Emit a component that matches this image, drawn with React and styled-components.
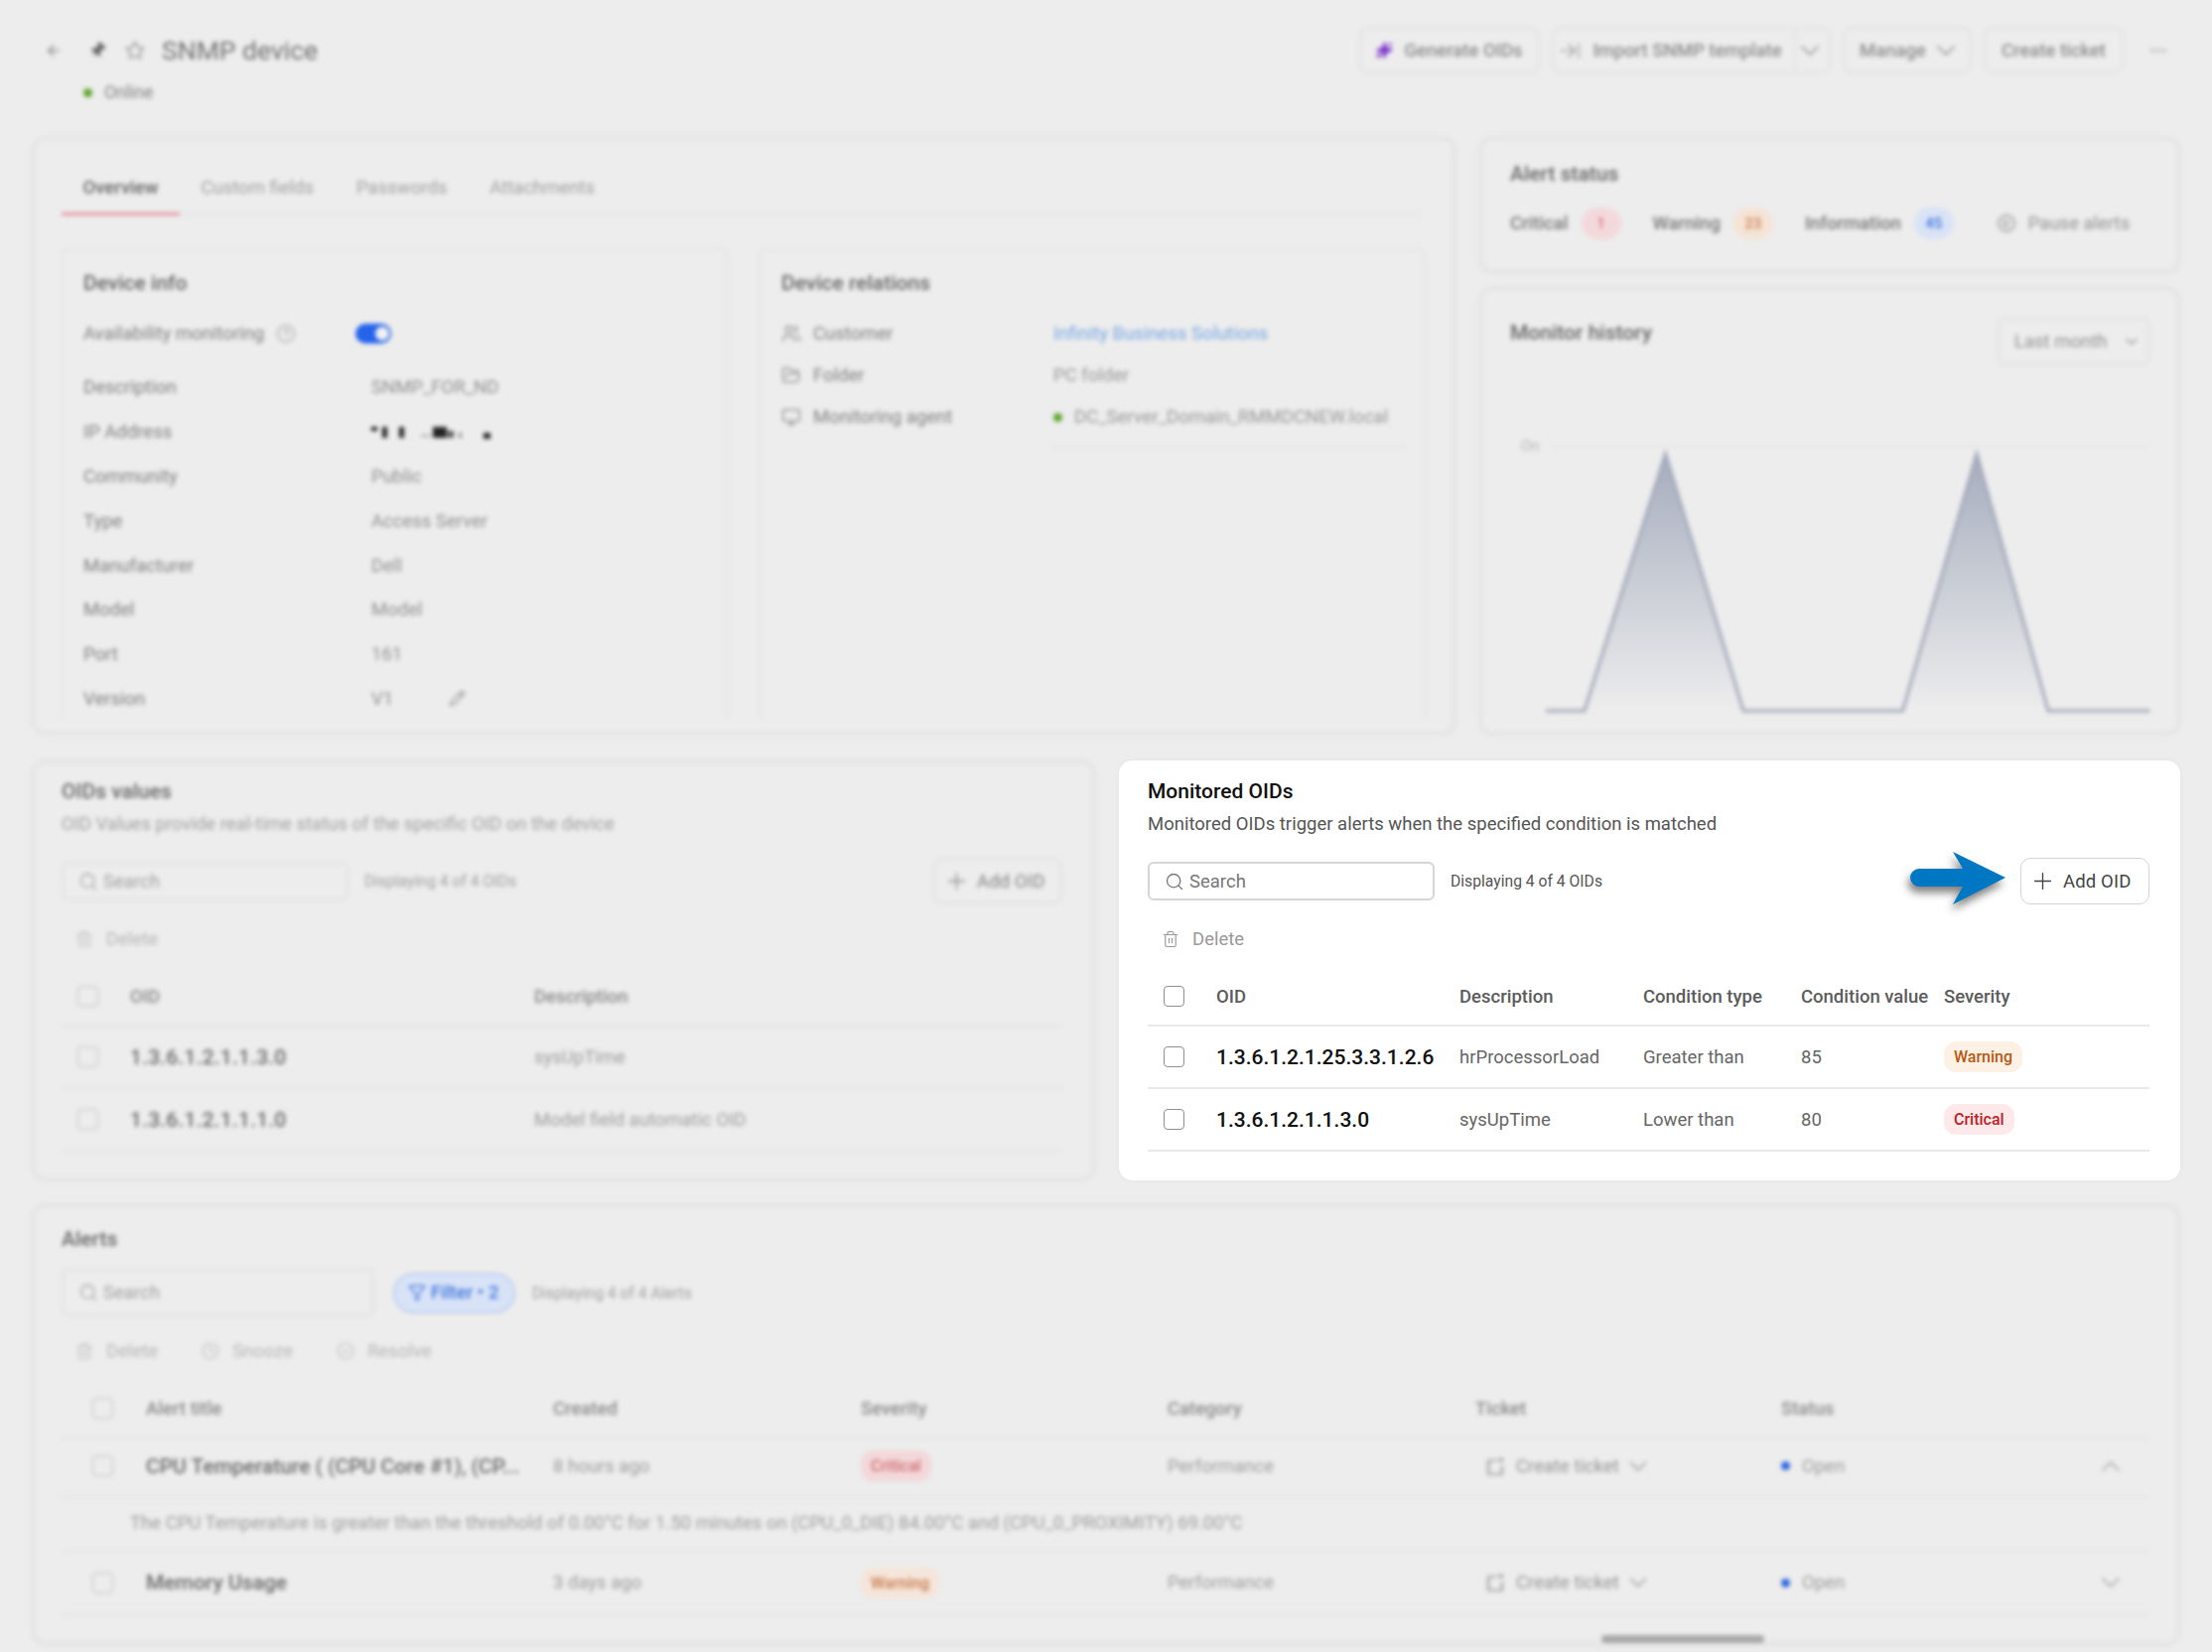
import React from "react";
import styled, { createGlobalStyle, css } from "styled-components";
import {
	ArrowLeft,
	ArrowRightToLine,
	ChevronDown,
	ChevronUp,
	CircleCheck,
	CircleHelp,
	Clock,
	Ellipsis,
	FolderOpen,
	Monitor,
	Pause,
	Pencil,
	Pin,
	Plus,
	Search,
	Sparkles,
	Star,
	Trash2,
	Users,
	Filter,
} from "lucide-react";

const GlobalStyle = createGlobalStyle`
	html, body {
		margin: 0;
		padding: 0;
		background: #ededed;
	}
	* {
		box-sizing: border-box;
	}
`;

const blurred = css`
	filter: blur(2.2px);
`;

const Page = styled.div`
	width: 2228px;
	height: 1664px;
	padding: 27px 32px 0;
	overflow: hidden;
	background: #ededed;
	font-family: Roboto, "Liberation Sans", sans-serif;
	font-size: 18.5px;
	color: #8a8a8a;
`;

const Header = styled.header`
	height: 79px;
	margin-bottom: 32px;
	${blurred}
`;
const HeaderTop = styled.div`
	display: flex;
	align-items: center;
	height: 47px;
	padding-left: 13px;
	color: #888;
`;
const HeaderIcons = styled.div`
	display: flex;
	align-items: center;
	gap: 19px;
	margin-right: 17px;
	& > svg:first-child {
		margin-right: 8px;
	}
`;
const TiltedPin = styled(Pin)`
	transform: rotate(40deg);
`;
const PageTitle = styled.h1`
	margin: 0;
	font-size: 26.5px;
	font-weight: 400;
	color: #707070;
`;
const HeaderActions = styled.div`
	display: flex;
	align-items: center;
	gap: 12px;
	margin-left: auto;
`;
const HeaderButton = styled.div`
	display: flex;
	align-items: center;
	justify-content: center;
	gap: 11px;
	height: 47px;
	width: ${(p) => p.$width}px;
	border: 2px solid #e2e2e2;
	border-radius: 9px;
	font-weight: 500;
	color: #8c8c8c;
`;
const Caret = styled(ChevronDown)`
	flex: none;
	margin: 0 -7px;
`;
const SplitCaret = styled.span`
	display: flex;
	align-items: center;
	align-self: stretch;
	padding: 0 6px 0 5px;
	border-left: 2px solid #e2e2e2;
	margin-left: 1px;
`;
const MoreButton = styled.div`
	display: flex;
	margin: 0 12px 0 13px;
	color: #aaa;
`;
const StatusLine = styled.div`
	display: flex;
	align-items: center;
	gap: 12px;
	height: 26px;
	margin: 6px 0 0 52px;
	font-size: 17.5px;
	color: #808080;
`;
const Dot = styled.span`
	width: ${(p) => p.$size || 9}px;
	height: ${(p) => p.$size || 9}px;
	border-radius: 50%;
	background: ${(p) => p.$color};
	flex: none;
`;

const TopGrid = styled.div`
	display: grid;
	grid-template-columns: 1434px 706px;
	grid-template-rows: 602px;
	gap: 24px;
`;
const MiddleGrid = styled.div`
	display: grid;
	grid-template-columns: 1071px 1069px;
	grid-template-rows: 423px;
	gap: 24px;
	margin: 26px 0 24px;
`;
const RightColumn = styled.div`
	display: flex;
	flex-direction: column;
	gap: 14px;
`;

const Panel = styled.section`
	position: relative;
	border-radius: 14px;
	border: 3px solid #e4e4e4;
	${(p) => p.$pad && `padding: ${p.$pad};`}
	${(p) => p.$fill && "flex: 1;"}
	${(p) => p.$height && `height: ${p.$height}px;`}
	${(p) =>
		p.$focus
			? "background: #fff; border: none; box-shadow: 0 0 6px rgba(0,0,0,.04);"
			: css`
					box-shadow: 0 0 0 1.5px #e6e6e6;
					${blurred}
				`}
`;

const Tabs = styled.div`
	display: flex;
	height: 49px;
	margin-right: 2px;
	border-bottom: 2px solid #e4e4e4;
`;
const Tab = styled.div`
	display: flex;
	align-items: flex-start;
	padding: 10px 21.5px 0;
	height: 49px;
	color: ${(p) => (p.$active ? "#666" : "#a0a0a0")};
	font-weight: ${(p) => (p.$active ? 500 : 400)};
	${(p) => p.$active && "border-bottom: 3px solid #e8919f;"}
`;

const CardGrid = styled.div`
	display: grid;
	grid-template-columns: 671px 671px;
	gap: 32px;
	margin-top: 33px;
`;
const Card = styled.div`
	height: 474px;
	padding: 20px 20px 0;
	border: 2px solid #e4e4e4;
	border-bottom: none;
	border-radius: 6px 6px 0 0;
`;
const CardTitle = styled.h3`
	margin: 0;
	height: 26px;
	line-height: 26px;
	font-size: 21px;
	font-weight: 500;
	color: #666;
`;
const InfoRow = styled.div`
	display: grid;
	grid-template-columns: 290px 1fr;
	align-items: center;
	height: 44.8px;
	color: #7f7f7f;
`;
const AvailabilityRow = styled(InfoRow)`
	height: 44px;
	margin: 16px 0 10px;
`;
const LabelGroup = styled.div`
	display: flex;
	align-items: center;
	gap: 12px;
`;
const Toggle = styled.div`
	display: flex;
	justify-content: flex-end;
	align-items: center;
	width: 36px;
	height: 20px;
	padding: 2px;
	margin-left: -16px;
	border-radius: 10px;
	background: #2563eb;
	&::after {
		content: "";
		width: 14px;
		height: 14px;
		border-radius: 50%;
		background: #f2f2f2;
	}
`;
const ValueGroup = styled.div`
	display: flex;
	align-items: center;
	gap: 56px;
	color: #8f8f8f;
`;
const RelationRow = styled.div`
	display: grid;
	grid-template-columns: 274px 356px;
	align-items: center;
	height: 42px;
	color: #7f7f7f;
	${(p) => p.$first && "margin-top: 17px;"}
`;
const RelationLabel = styled.div`
	display: flex;
	align-items: center;
	gap: 12px;
`;
const RelationValue = styled.div`
	display: flex;
	align-items: center;
	gap: 12px;
	color: ${(p) => p.$color || "#979797"};
	white-space: nowrap;
`;
const RelationDivider = styled.div`
	width: 356px;
	height: 2px;
	margin: 8px 0 0 274px;
	background: #e4e4e4;
`;

const PanelTitle = styled.h2`
	margin: 0;
	height: 26px;
	line-height: 26px;
	font-size: 21px;
	font-weight: 500;
	color: ${(p) => (p.$focus ? "#111" : "#666")};
`;
const PanelDescription = styled.p`
	margin: 7px 0 0;
	height: 26px;
	line-height: 26px;
	color: ${(p) => (p.$focus ? "#555" : "#a0a0a0")};
`;
const Toolbar = styled.div`
	position: relative;
	display: flex;
	align-items: center;
	height: ${(p) => p.$height || 47}px;
	margin-top: ${(p) => p.$top || 21}px;
`;
const SearchBox = styled.div`
	display: flex;
	align-items: center;
	gap: 5px;
	width: ${(p) => p.$width || 289}px;
	height: ${(p) => p.$height || 39}px;
	padding-left: 15px;
	border: 2px solid ${(p) => (p.$focus ? "#d6d6d6" : "#e0e0e0")};
	border-radius: 6px;
	color: ${(p) => (p.$focus ? "#777" : "#a0a0a0")};
`;
const CountText = styled.span`
	margin-left: ${(p) => p.$left || 16}px;
	font-size: 15.7px;
	color: ${(p) => (p.$focus ? "#555" : "#a0a0a0")};
`;
const FilterPill = styled.div`
	display: flex;
	align-items: center;
	gap: 5px;
	width: 123px;
	height: 41px;
	margin-left: 19px;
	padding-left: 13px;
	border: 2px solid #bccff0;
	border-radius: 21px;
	background: #d8e3f7;
	color: #3f74dc;
	font-weight: 500;
`;
const AddButton = styled.div`
	display: flex;
	align-items: center;
	gap: 7px;
	width: 130px;
	height: 47px;
	margin-left: auto;
	padding-left: 8px;
	border: ${(p) => (p.$focus ? "1.5px solid #d4d4d4" : "2px solid #e0e0e0")};
	border-radius: 10px;
	color: ${(p) => (p.$focus ? "#444" : "#808080")};
	letter-spacing: 0.15px;
`;
const PointerArrow = styled.svg`
	position: absolute;
	right: 145px;
	top: -6px;
	overflow: visible;
	filter: drop-shadow(-2px 6px 4px rgba(0, 0, 0, 0.5));
`;
const ActionRow = styled.div`
	display: flex;
	align-items: center;
	gap: 44px;
	height: 40px;
	margin-top: 15px;
	padding-left: ${(p) => p.$left || 14}px;
`;
const ActionItem = styled.div`
	display: flex;
	align-items: center;
	gap: 13px;
	color: ${(p) => (p.$focus ? "#999" : "#b5b5b5")};
`;

const Row = styled.div`
	display: grid;
	grid-template-columns: ${(p) => p.$cols};
	align-items: center;
	height: ${(p) => p.$height}px;
	padding-left: ${(p) => p.$left}px;
	padding-bottom: ${(p) => p.$bottom || 0}px;
	border-bottom: 2px solid ${(p) => (p.$focus ? "#e9e9e9" : "#e3e3e3")};
	white-space: nowrap;
`;
const HeadRow = styled(Row)`
	margin-top: 11px;
	align-items: start;
	padding-top: 16px;
	font-weight: 500;
	color: ${(p) => (p.$focus ? "#5c5c5c" : "#8a8a8a")};
`;
const CheckBox = styled.span`
	display: block;
	width: 21px;
	height: 21px;
	border: 1.5px solid ${(p) => (p.$focus ? "#8f8f8f" : "#bababa")};
	border-radius: 4px;
`;
const OidText = styled.span`
	font-size: 21px;
	font-weight: 500;
	letter-spacing: ${(p) => (p.$focus ? 0 : 0.2)}px;
	color: ${(p) => (p.$focus ? "#111" : "#6a6a6a")};
`;
const CellText = styled.span`
	color: ${(p) => (p.$focus ? "#666" : "#9c9c9c")};
`;
const Severity = styled.span`
	display: inline-flex;
	align-items: center;
	justify-self: start;
	height: 31px;
	padding: 0 10px;
	border-radius: 12px;
	font-size: 16px;
	font-weight: 500;
	${(p) =>
		p.$level === "Warning"
			? `background: ${p.$focus ? "#fdf0e5" : "#f5e5da"}; color: ${p.$focus ? "#b65a10" : "#c77b4a"};`
			: `background: ${p.$focus ? "#fde9e9" : "#f3d8da"}; color: ${p.$focus ? "#bd2026" : "#cf6a70"};`}
`;

const StatusRow = styled.div`
	display: flex;
	align-items: center;
	height: 32px;
	margin-top: 21px;
	color: #777;
	font-weight: 500;
`;
const StatusLabel = styled.span`
	margin-right: 13px;
`;
const CountBadge = styled.span`
	display: flex;
	align-items: center;
	justify-content: center;
	width: 40px;
	height: 32px;
	margin-right: 32px;
	border-radius: 16px;
	font-size: 15px;
	background: ${(p) => p.$bg};
	color: ${(p) => p.$color};
`;
const PauseAlerts = styled.div`
	display: flex;
	align-items: center;
	gap: 13px;
	margin-left: 12px;
	font-weight: 400;
	color: #909090;
`;
const PauseIcon = styled.span`
	display: flex;
	align-items: center;
	justify-content: center;
	width: 18px;
	height: 18px;
	border: 2px solid #a5a5a5;
	border-radius: 50%;
`;

const HistoryHead = styled.div`
	display: flex;
	justify-content: space-between;
	align-items: flex-start;
`;
const HistoryTitle = styled(PanelTitle)`
	margin-top: 2px;
`;
const SelectBox = styled.div`
	display: flex;
	align-items: center;
	justify-content: space-between;
	width: 153px;
	height: 48px;
	padding: 0 6px 0 15px;
	border: 2px solid #e0e0e0;
	border-radius: 6px;
	color: #919191;
`;
const Chart = styled.svg`
	display: block;
	margin-top: 73px;
`;
const ChartLabel = styled.text`
	font-size: 15px;
	fill: #b5b5b5;
`;

const AlertsDetail = styled.div`
	display: flex;
	align-items: center;
	height: 54px;
	padding: 0 0 3px 69px;
	border-bottom: 2px solid #e3e3e3;
	font-size: 18.5px;
	color: #9c9c9c;
	white-space: nowrap;
`;
const TicketCell = styled.div`
	display: flex;
	align-items: center;
	gap: 11px;
	padding-left: 10px;
	color: #949494;
`;
const OpenCell = styled.div`
	display: flex;
	align-items: center;
	gap: 12px;
	color: #9c9c9c;
`;
const RowChevron = styled.div`
	display: flex;
	margin-left: 8px;
	color: #a0a0a0;
`;
const TitleClip = styled(OidText)`
	display: block;
	overflow: hidden;
	text-overflow: ellipsis;
	letter-spacing: 0;
`;
const ScrollThumb = styled.div`
	position: absolute;
	left: 1578px;
	bottom: -1px;
	width: 164px;
	height: 8px;
	border-radius: 4px;
	background: #a8a8a8;
`;

const infoRows = [
	["Description", "SNMP_FOR_ND"],
	["IP Address", null],
	["Community", "Public"],
	["Type", "Access Server"],
	["Manufacturer", "Dell"],
	["Model", "Model"],
	["Port", "161"],
];

const valueCols = "53px 407px 1fr";
const monitoredCols = "53px 245px 185px 159px 144px 1fr";
const alertCols = "54px 410px 310px 309px 310px 308px 308px 1fr";

const IpRedacted = () => (
	<svg width="122" height="14" viewBox="0 0 122 14">
		<rect x="0" y="2" width="6" height="4" fill="#111" />
		<rect x="11" y="2" width="5" height="11" fill="#222" />
		<rect x="28" y="2" width="5" height="11" fill="#222" />
		<rect x="50" y="10" width="10" height="2" fill="#aaa" />
		<rect x="62" y="2" width="14" height="11" fill="#222" />
		<rect x="77" y="6" width="6" height="7" fill="#555" />
		<rect x="88" y="8" width="3" height="5" fill="#888" />
		<rect x="113" y="8" width="7" height="6" fill="#222" />
	</svg>
);

const TicketIcon = () => (
	<svg width="20" height="20" viewBox="0 0 20 20" fill="none" stroke="currentColor" strokeWidth="1.6">
		<path d="M12 4 H3 V18 H17 V9" />
		<path d="M3 8 H5 M3 14 H5 M15 14 H17" />
		<path d="M16 1 V6 M13.5 3.5 H18.5" />
	</svg>
);

const ToolSearch = ({ focus, width, height }) => (
	<SearchBox $focus={focus} $width={width} $height={height}>
		<Search size={20} strokeWidth={1.6} />
		Search
	</SearchBox>
);

const DeleteAction = ({ focus }) => (
	<ActionItem $focus={focus}>
		<Trash2 size={18} strokeWidth={1.5} />
		Delete
	</ActionItem>
);

const CreateTicket = () => (
	<TicketCell>
		<TicketIcon />
		Create ticket
		<Caret size={30} strokeWidth={1.2} />
	</TicketCell>
);

const App = () => {
	return (
		<>
			<GlobalStyle />
			<Page>
				<Header>
					<HeaderTop>
						<HeaderIcons>
							<ArrowLeft size={18} strokeWidth={1.8} />
							<TiltedPin size={17} fill="#555" strokeWidth={1.8} />
							<Star size={20} strokeWidth={1.6} />
						</HeaderIcons>
						<PageTitle>SNMP device</PageTitle>
						<HeaderActions>
							<HeaderButton $width={182}>
								<Sparkles size={17} color="#7b2fc9" fill="#7b2fc9" />
								Generate OIDs
							</HeaderButton>
							<HeaderButton $width={281}>
								<ArrowRightToLine size={24} strokeWidth={1.2} />
								Import SNMP template
								<SplitCaret>
									<Caret size={32} strokeWidth={1.2} />
								</SplitCaret>
							</HeaderButton>
							<HeaderButton $width={130}>
								Manage
								<Caret size={32} strokeWidth={1.2} />
							</HeaderButton>
							<HeaderButton $width={141}>Create ticket</HeaderButton>
							<MoreButton>
								<Ellipsis size={20} />
							</MoreButton>
						</HeaderActions>
					</HeaderTop>
					<StatusLine>
						<Dot $color="#5fa52e" />
						Online
					</StatusLine>
				</Header>

				<TopGrid>
					<Panel $pad="27px 30px 0 27px">
						<Tabs>
							<Tab $active>Overview</Tab>
							<Tab>Custom fields</Tab>
							<Tab>Passwords</Tab>
							<Tab>Attachments</Tab>
						</Tabs>
						<CardGrid>
							<Card>
								<CardTitle>Device info</CardTitle>
								<AvailabilityRow>
									<LabelGroup>
										Availability monitoring
										<CircleHelp size={20} strokeWidth={1.5} color="#a0a0a0" />
									</LabelGroup>
									<Toggle />
								</AvailabilityRow>
								{infoRows.map(([label, value]) => (
									<InfoRow key={label}>
										<span>{label}</span>
										<ValueGroup>{value || <IpRedacted />}</ValueGroup>
									</InfoRow>
								))}
								<InfoRow>
									<span>Version</span>
									<ValueGroup>
										V1
										<Pencil size={17} strokeWidth={1.6} color="#888" />
									</ValueGroup>
								</InfoRow>
							</Card>
							<Card>
								<CardTitle>Device relations</CardTitle>
								<RelationRow $first>
									<RelationLabel>
										<Users size={20} strokeWidth={1.5} />
										Customer
									</RelationLabel>
									<RelationValue $color="#74a6e4">Infinity Business Solutions</RelationValue>
								</RelationRow>
								<RelationRow>
									<RelationLabel>
										<FolderOpen size={20} strokeWidth={1.5} />
										Folder
									</RelationLabel>
									<RelationValue>PC folder</RelationValue>
								</RelationRow>
								<RelationRow>
									<RelationLabel>
										<Monitor size={20} strokeWidth={1.5} />
										Monitoring agent
									</RelationLabel>
									<RelationValue>
										<Dot $color="#5fa52e" />
										DC_Server_Domain_RMMDCNEW.local
									</RelationValue>
								</RelationRow>
								<RelationDivider />
							</Card>
						</CardGrid>
					</Panel>

					<RightColumn>
						<Panel $pad="21px 28px 0" $height={137}>
							<PanelTitle>Alert status</PanelTitle>
							<StatusRow>
								<StatusLabel>Critical</StatusLabel>
								<CountBadge $bg="#f3d9dc" $color="#d0747c">1</CountBadge>
								<StatusLabel>Warning</StatusLabel>
								<CountBadge $bg="#f5e3d6" $color="#cc7f50">23</CountBadge>
								<StatusLabel>Information</StatusLabel>
								<CountBadge $bg="#d9e3f6" $color="#3f74dc">45</CountBadge>
								<PauseAlerts>
									<PauseIcon>
										<Pause size={9} strokeWidth={2} />
									</PauseIcon>
									Pause alerts
								</PauseAlerts>
							</StatusRow>
						</Panel>
						<Panel $pad="28px 28px 0" $fill>
							<HistoryHead>
								<HistoryTitle>Monitor history</HistoryTitle>
								<SelectBox>
									Last month
									<ChevronDown size={20} strokeWidth={1.6} />
								</SelectBox>
							</HistoryHead>
							<Chart width="650" height="290" viewBox="0 0 650 290">
								<defs>
									<linearGradient id="historyFill" x1="0" y1="0" x2="0" y2="1">
										<stop offset="0" stopColor="#a6adbe" />
										<stop offset="1" stopColor="#ededed" />
									</linearGradient>
								</defs>
								<ChartLabel x="11" y="13">On</ChartLabel>
								<line x1="42" y1="8" x2="643" y2="8" stroke="#e3e3e3" strokeWidth="1.5" />
								<polygon points="75,275 156.5,16 235,275" fill="url(#historyFill)" />
								<polygon points="395.5,275 470,16 542,275" fill="url(#historyFill)" />
								<polyline
									points="36,275 75,275 156.5,16 235,275 395.5,275 470,16 542,275 644.5,275"
									fill="none"
									stroke="#a0a7b8"
									strokeWidth="3"
								/>
							</Chart>
						</Panel>
					</RightColumn>
				</TopGrid>

				<MiddleGrid>
					<Panel $pad="15px 30px 0 27px">
						<PanelTitle>OIDs values</PanelTitle>
						<PanelDescription>OID Values provide real-time status of the specific OID on the device</PanelDescription>
						<Toolbar>
							<ToolSearch />
							<CountText>Displaying 4 of 4 OIDs</CountText>
							<AddButton>
								<Plus size={27} strokeWidth={1.2} />
								Add OID
							</AddButton>
						</Toolbar>
						<ActionRow>
							<DeleteAction />
						</ActionRow>
						<HeadRow $cols={valueCols} $height={57} $left={16}>
							<CheckBox />
							<span>OID</span>
							<span>Description</span>
						</HeadRow>
						<Row $cols={valueCols} $height={63} $left={16}>
							<CheckBox />
							<OidText>1.3.6.1.2.1.1.3.0</OidText>
							<CellText>sysUpTime</CellText>
						</Row>
						<Row $cols={valueCols} $height={63} $left={16}>
							<CheckBox />
							<OidText>1.3.6.1.2.1.1.1.0</OidText>
							<CellText>Model field automatic OID</CellText>
						</Row>
					</Panel>

					<Panel $focus $pad="18px 31px 0 29px">
						<PanelTitle $focus>Monitored OIDs</PanelTitle>
						<PanelDescription $focus>Monitored OIDs trigger alerts when the specified condition is matched</PanelDescription>
						<Toolbar>
							<ToolSearch focus />
							<CountText $focus>Displaying 4 of 4 OIDs</CountText>
							<PointerArrow width="96" height="53" viewBox="0 0 96 53">
								<path
									d="M9 17 L53 17 L43 0 L96 26 L43 53 L53 35 L9 35 A9 9 0 0 1 9 17 Z"
									fill="#0077c2"
								/>
							</PointerArrow>
							<AddButton $focus>
								<Plus size={27} strokeWidth={1.2} />
								Add OID
							</AddButton>
						</Toolbar>
						<ActionRow>
							<DeleteAction focus />
						</ActionRow>
						<HeadRow $focus $cols={monitoredCols} $height={57} $left={16}>
							<CheckBox $focus />
							<span>OID</span>
							<span>Description</span>
							<span>Condition type</span>
							<span>Condition value</span>
							<span>Severity</span>
						</HeadRow>
						<Row $focus $cols={monitoredCols} $height={63} $left={16}>
							<CheckBox $focus />
							<OidText $focus>1.3.6.1.2.1.25.3.3.1.2.6</OidText>
							<CellText $focus>hrProcessorLoad</CellText>
							<CellText $focus>Greater than</CellText>
							<CellText $focus>85</CellText>
							<Severity $focus $level="Warning">Warning</Severity>
						</Row>
						<Row $focus $cols={monitoredCols} $height={63} $left={16}>
							<CheckBox $focus />
							<OidText $focus>1.3.6.1.2.1.1.3.0</OidText>
							<CellText $focus>sysUpTime</CellText>
							<CellText $focus>Lower than</CellText>
							<CellText $focus>80</CellText>
							<Severity $focus $level="Critical">Critical</Severity>
						</Row>
					</Panel>
				</MiddleGrid>

				<Panel $pad="19px 28px 0 27px" $height={444}>
					<PanelTitle>Alerts</PanelTitle>
					<Toolbar $top={17} $height={48}>
						<ToolSearch width={315} height={48} />
						<FilterPill>
							<Filter size={18} strokeWidth={1.8} />
							Filter • 2
						</FilterPill>
						<CountText $left={17}>Displaying 4 of 4 Alerts</CountText>
					</Toolbar>
					<ActionRow>
						<DeleteAction />
						<ActionItem>
							<Clock size={18} strokeWidth={1.5} />
							Snooze
						</ActionItem>
						<ActionItem>
							<CircleCheck size={18} strokeWidth={1.5} />
							Resolve
						</ActionItem>
					</ActionRow>
					<HeadRow $cols={alertCols} $height={57} $left={31}>
						<CheckBox />
						<span>Alert title</span>
						<span>Created</span>
						<span>Severity</span>
						<span>Category</span>
						<span>Ticket</span>
						<span>Status</span>
					</HeadRow>
					<Row $cols={alertCols} $height={60} $left={31} $bottom={3}>
						<CheckBox />
						<TitleClip>CPU Temperature ( (CPU Core #1), (CP...</TitleClip>
						<CellText>8 hours ago</CellText>
						<Severity $level="Critical">Critical</Severity>
						<CellText>Performance</CellText>
						<CreateTicket />
						<OpenCell>
							<Dot $color="#2f66e0" />
							Open
						</OpenCell>
						<RowChevron>
							<ChevronUp size={32} strokeWidth={1.2} />
						</RowChevron>
					</Row>
					<AlertsDetail>
						The CPU Temperature is greater than the threshold of 0.00°C for 1.50 minutes on (CPU_0_DIE) 84.00°C and (CPU_0_PROXIMITY) 69.00°C
					</AlertsDetail>
					<Row $cols={alertCols} $height={64} $left={31}>
						<CheckBox />
						<TitleClip>Memory Usage</TitleClip>
						<CellText>3 days ago</CellText>
						<Severity $level="Warning">Warning</Severity>
						<CellText>Performance</CellText>
						<CreateTicket />
						<OpenCell>
							<Dot $color="#2f66e0" />
							Open
						</OpenCell>
						<RowChevron>
							<ChevronDown size={32} strokeWidth={1.2} />
						</RowChevron>
					</Row>
					<ScrollThumb />
				</Panel>
			</Page>
		</>
	);
};

export default App;
